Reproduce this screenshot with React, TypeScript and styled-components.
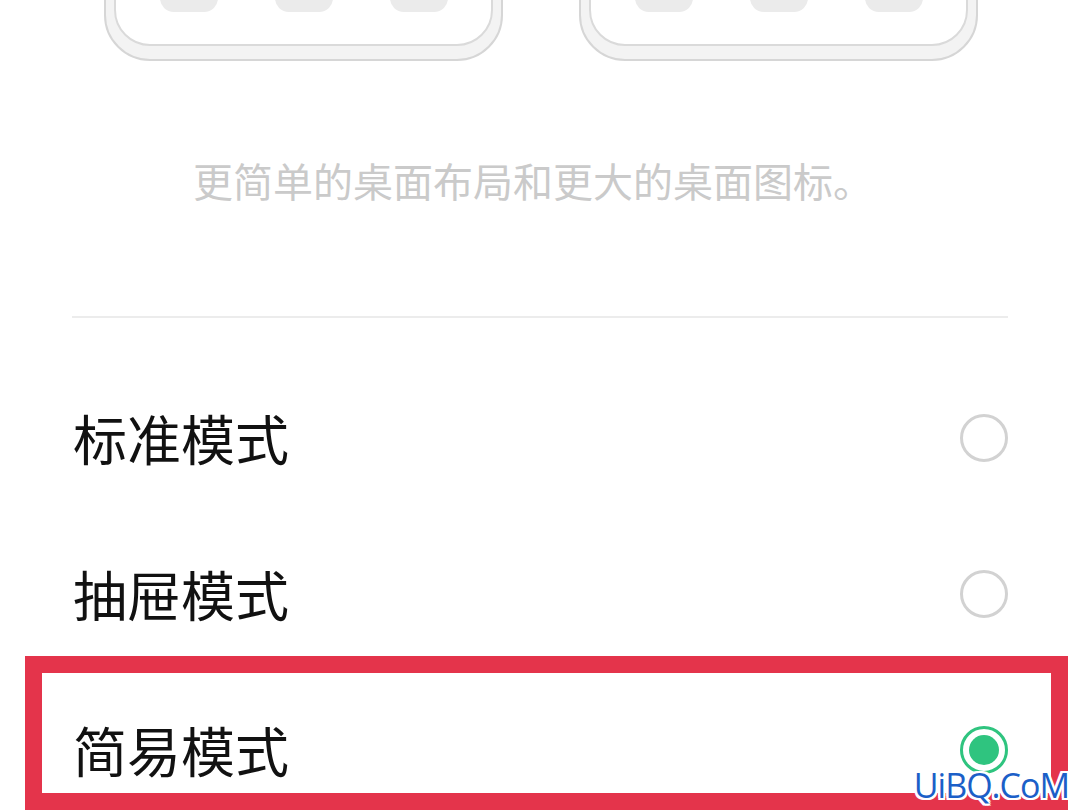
import React from 'react'
import styled, { createGlobalStyle } from 'styled-components'

const GlobalStyle = createGlobalStyle`
  html, body {
    margin: 0;
    padding: 0;
    background: #ffffff;
    overflow: hidden;
  }
  body {
    font-family: "Noto Sans CJK SC", "Noto Sans", sans-serif;
  }
`

const Page = styled.div`
  position: relative;
  width: 1080px;
  height: 810px;
  overflow: hidden;
  background: #ffffff;
`

const PreviewStrip = styled.div`
  height: 61px;
  overflow: hidden;
  display: flex;
  justify-content: center;
  align-items: flex-end;
  gap: 76px;
  margin-left: 2px;
`

const Phone = styled.div`
  width: 399px;
  height: 300px;
  box-sizing: border-box;
  border: 2px solid #d6d6d6;
  border-radius: 46px;
  background: #f3f3f3;
  padding: 7px 8px 13px;
  display: flex;
  flex-shrink: 0;
`

const Screen = styled.div`
  flex: 1;
  border: 2px solid #dadada;
  border-radius: 36px;
  background: #ffffff;
  display: flex;
  align-items: flex-end;
  justify-content: center;
  gap: 57px;
  padding-bottom: 32px;
`

const AppIcon = styled.div`
  width: 58px;
  height: 58px;
  border-radius: 14px;
  background: #ebebeb;
`

const Content = styled.div`
  padding: 0 72px;
  display: flex;
  flex-direction: column;
`

const Description = styled.div`
  margin-top: 97px;
  height: 44px;
  line-height: 44px;
  font-size: 40px;
  color: #cacaca;
  text-align: center;
  margin-left: -14px;
`

const Divider = styled.div`
  margin-top: 114px;
  height: 2px;
  background: #ececec;
`

const OptionList = styled.div`
  margin-top: 42px;
  display: flex;
  flex-direction: column;
`

const Row = styled.div<{ $highlight?: boolean }>`
  position: relative;
  height: 156px;
  display: flex;
  align-items: center;
  justify-content: space-between;

  ${({ $highlight }) =>
    $highlight &&
    `
    &::after {
      content: '';
      position: absolute;
      left: -47px;
      right: -60px;
      top: -16px;
      bottom: 18px;
      border: 17px solid #e4344b;
      pointer-events: none;
    }
  `}
`

const Label = styled.div`
  font-size: 54px;
  line-height: 1;
  color: #111111;
  margin-left: 1px;
`

const Radio = styled.div<{ $checked?: boolean }>`
  width: 48px;
  height: 48px;
  box-sizing: border-box;
  border-radius: 50%;
  border: 3px solid ${({ $checked }) => ($checked ? '#2fc47f' : '#d2d2d2')};
  background: #ffffff;
  display: flex;
  align-items: center;
  justify-content: center;

  &::before {
    content: '';
    width: 30px;
    height: 30px;
    border-radius: 50%;
    background: ${({ $checked }) => ($checked ? '#2fc47f' : 'transparent')};
  }
`

const Watermark = styled.div`
  position: absolute;
  right: 11px;
  bottom: 8px;
  font-family: "Open Sans", "Liberation Sans", sans-serif;
  font-size: 34px;
  line-height: 1;
  font-weight: 500;
  color: #1b5fc8;
  letter-spacing: -1px;
  text-shadow:
    -2px 0 #fff, 2px 0 #fff, 0 -2px #fff, 0 2px #fff,
    -2px -2px #fff, 2px 2px #fff, -2px 2px #fff, 2px -2px #fff;
`

const options = [
  { id: 'standard', name: '标准模式', checked: false },
  { id: 'drawer', name: '抽屉模式', checked: false },
  { id: 'simple', name: '简易模式', checked: true },
]

function PhonePreview() {
  return (
    <Phone>
      <Screen>
        <AppIcon />
        <AppIcon />
        <AppIcon />
      </Screen>
    </Phone>
  )
}

export default function App() {
  return (
    <Page>
      <GlobalStyle />
      <PreviewStrip>
        <PhonePreview />
        <PhonePreview />
      </PreviewStrip>
      <Content>
        <Description>更简单的桌面布局和更大的桌面图标。</Description>
        <Divider />
        <OptionList>
          {options.map((option) => (
            <Row key={option.id} $highlight={option.checked}>
              <Label>{option.name}</Label>
              <Radio $checked={option.checked} />
            </Row>
          ))}
        </OptionList>
      </Content>
      <Watermark>UiBQ.CoM</Watermark>
    </Page>
  )
}
